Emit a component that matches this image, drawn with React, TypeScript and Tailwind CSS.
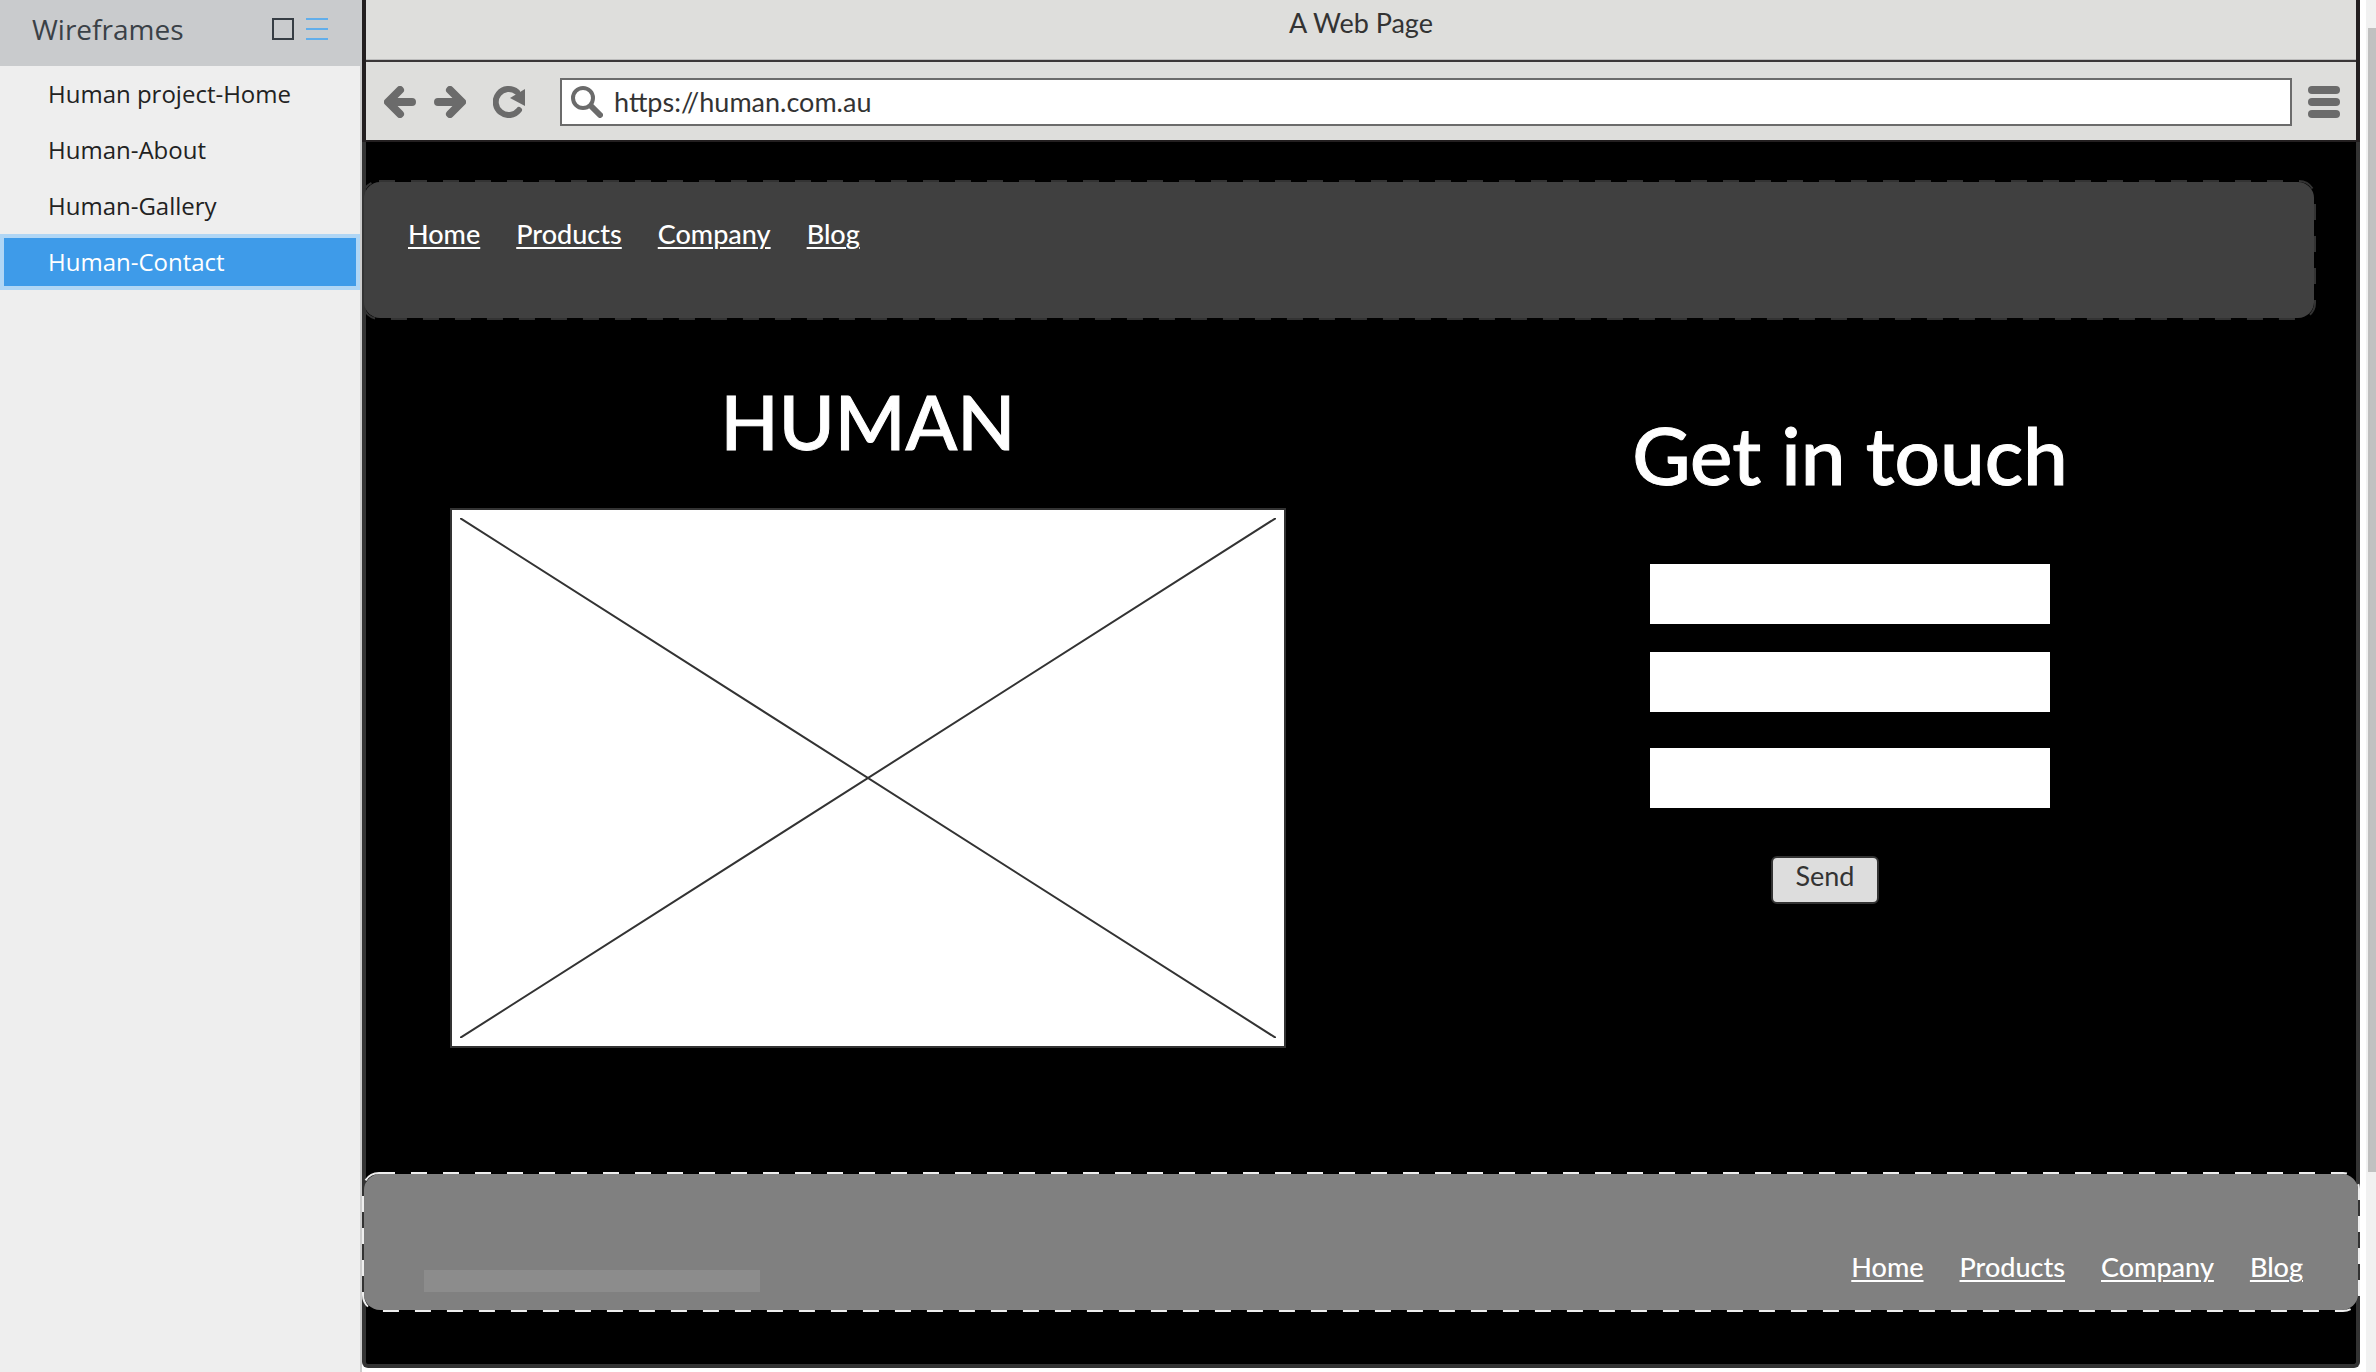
import React from "react";

const pages = ["Human project-Home", "Human-About", "Human-Gallery", "Human-Contact"];
const links = ["Home", "Products", "Company", "Blog"];

function DashedOutline({ color }: { color: string }) {
  return (
    <svg className="pointer-events-none absolute -top-0.5 -left-0.5 h-[calc(100%+4px)] w-[calc(100%+4px)] overflow-visible p-px" aria-hidden="true">
      <rect width="100%" height="100%" rx="16" fill="none" stroke={color} strokeWidth="2" strokeDasharray="16 16" />
    </svg>
  );
}

function Links({ label }: { label: string }) {
  return (
    <nav aria-label={label}>
      <ul className="flex gap-9">
        {links.map((l) => (
          <li key={l}>
            <a href="#" className="text-[27px] leading-8 font-medium text-white underline decoration-2 underline-offset-3">
              {l}
            </a>
          </li>
        ))}
      </ul>
    </nav>
  );
}

function Sidebar() {
  return (
    <aside className="w-[362px] shrink-0 bg-[#eeeeee] font-['Open_Sans',sans-serif]">
      <div className="flex h-[66px] items-center bg-[#c9cbcd] pr-[34px] pb-2 pl-8">
        <h2 className="flex-1 text-[28px] leading-9 text-[#3a4147]">Wireframes</h2>
        <button aria-label="Thumbnail view" className="h-[22px] w-[22px] border-2 border-[#363d44]" />
        <button aria-label="List view" className="ml-3 flex h-[22px] w-[22px] flex-col justify-between">
          <span className="h-0.5 w-full bg-[#62aeea]" />
          <span className="h-0.5 w-full bg-[#62aeea]" />
          <span className="h-0.5 w-full bg-[#62aeea]" />
        </button>
      </div>
      <ul className="min-h-[calc(100vh-66px)] border-r-2 border-[#cccccc]">
        {pages.map((p) => (
          <li key={p}>
            <button
              className={
                p === "Human-Contact"
                  ? "block h-14 w-full border-4 border-[#b0d6f5] bg-[#3e9be9] pl-11 text-left text-2xl text-white"
                  : "block h-14 w-full border-4 border-transparent pl-11 text-left text-2xl text-[#222222]"
              }
            >
              {p}
            </button>
          </li>
        ))}
      </ul>
    </aside>
  );
}

function Toolbar() {
  return (
    <div className="flex h-20 items-center border-b-2 border-[#231f20] bg-[#dededc] pt-0.5 pr-4 pl-[18px] text-[#6b6b6b]">
      <button aria-label="Back">
        <svg className="block" width="32" height="32" viewBox="0 0 32 32" fill="none" stroke="currentColor" strokeWidth="8" strokeLinecap="round" strokeLinejoin="round">
          <path d="M28 16H8M16 4L4 16l12 12" />
        </svg>
      </button>
      <button aria-label="Forward" className="ml-[18px]">
        <svg className="block" width="32" height="32" viewBox="0 0 32 32" fill="none" stroke="currentColor" strokeWidth="8" strokeLinecap="round" strokeLinejoin="round">
          <path d="M4 16h20M16 4l12 12-12 12" />
        </svg>
      </button>
      <button aria-label="Reload" className="ml-[27px]">
        <svg className="block" width="32" height="32" viewBox="0 0 32 32">
          <path d="M26 24A13 13 0 1 1 24 6" fill="none" stroke="currentColor" strokeWidth="6" strokeLinecap="round" />
          <path d="M32 3v17L17 12z" fill="currentColor" />
        </svg>
      </button>
      <label className="ml-[35px] flex h-12 flex-1 items-center border-2 border-[#6b6b6b] bg-white pl-[9px]">
        <svg width="32" height="32" viewBox="0 0 32 32" fill="none" stroke="currentColor" aria-hidden="true">
          <circle cx="12" cy="12" r="10" strokeWidth="4" />
          <path d="M20 20l9 9" strokeWidth="6" strokeLinecap="round" />
        </svg>
        <input aria-label="Address" defaultValue="https://human.com.au" className="ml-[11px] min-w-0 flex-1 text-[27px] leading-8 text-[#333333] outline-none" />
      </label>
      <button aria-label="Menu" className="ml-4 flex w-8 flex-col gap-1">
        <span className="h-2 w-full rounded-full bg-[#6b6b6b]" />
        <span className="h-2 w-full rounded-full bg-[#6b6b6b]" />
        <span className="h-2 w-full rounded-full bg-[#6b6b6b]" />
      </button>
    </div>
  );
}

function Placeholder() {
  return (
    <div className="mt-[39px] aspect-[836/540] border-2 border-[#333333] bg-white p-2">
      <svg className="block h-full w-full" preserveAspectRatio="none" viewBox="0 0 816 520" role="img" aria-label="Image placeholder">
        <path d="M0 0L816 520M816 0L0 520" stroke="#333333" strokeWidth="2" fill="none" />
      </svg>
    </div>
  );
}

function Field({ label }: { label: string }) {
  return <input aria-label={label} className="block h-[60px] w-[400px] bg-white px-3 text-2xl text-[#333333]" />;
}

export default function App() {
  return (
    <div className="flex min-h-screen bg-white font-[Lato,sans-serif]">
      <Sidebar />
      <div className="mb-1 flex min-w-0 flex-1 flex-col rounded-b-md border-4 border-t-0 border-[#333333] bg-black">
        <header className="-mx-1 border-x-4 border-[#231f20]">
          <div className="h-[60px] border-b border-[#bbbbbb] bg-[#dededc] pt-[7px] text-center text-[27px] leading-8 text-[#333333]">A Web Page</div>
          <div className="h-0.5 bg-[#3a3738]" />
          <Toolbar />
        </header>
        <div className="relative mt-[38px] mr-10 -ml-1 h-[140px] rounded-[18px] border-2 border-transparent bg-[#404040] bg-clip-padding pt-[36px] pl-[44px]">
          <Links label="Primary" />
          <DashedOutline color="#333333" />
        </div>
        <main className="flex items-start pl-[84px]">
          <section className="w-[836px] min-w-0 shrink pt-[53px]">
            <h1 className="text-center text-[76px] leading-24 font-medium text-white [-webkit-text-stroke:1px_white]">HUMAN</h1>
            <Placeholder />
          </section>
          <form className="flex flex-1 flex-col items-center pt-[86px] pl-[58px]">
            <h2 className="text-[80px] leading-24 font-medium text-white [-webkit-text-stroke:1px_white]">Get in touch</h2>
            <div className="mt-[62px] flex flex-col gap-7">
              <Field label="Name" />
              <Field label="Email" />
              <div className="pt-2">
                <Field label="Message" />
              </div>
            </div>
            <button type="button" className="mt-12 mr-[50px] rounded-md border-2 border-[#333333] bg-[#dddddd] px-[22px] pt-0.5 pb-2.5 text-[27px] leading-8 text-[#333333]">
              Send
            </button>
          </form>
        </main>
        <footer className="relative -mx-1 mt-auto mb-[52px] flex h-[140px] items-end justify-between rounded-[18px] border-2 border-transparent bg-[#808080] bg-clip-padding pr-[55px] pb-[18px] pl-[60px]">
          <div className="h-[22px] w-[336px] bg-[#8c8c8c]" />
          <div className="pb-[9px]">
            <Links label="Footer" />
          </div>
          <DashedOutline color="#eeeeee" />
        </footer>
      </div>
      <div className="ml-1.5 w-2.5 shrink-0 bg-[#f1f1f1] pt-7 pl-0.5">
        <div className="h-[1144px] bg-[#c1c1c1]" />
      </div>
    </div>
  );
}
